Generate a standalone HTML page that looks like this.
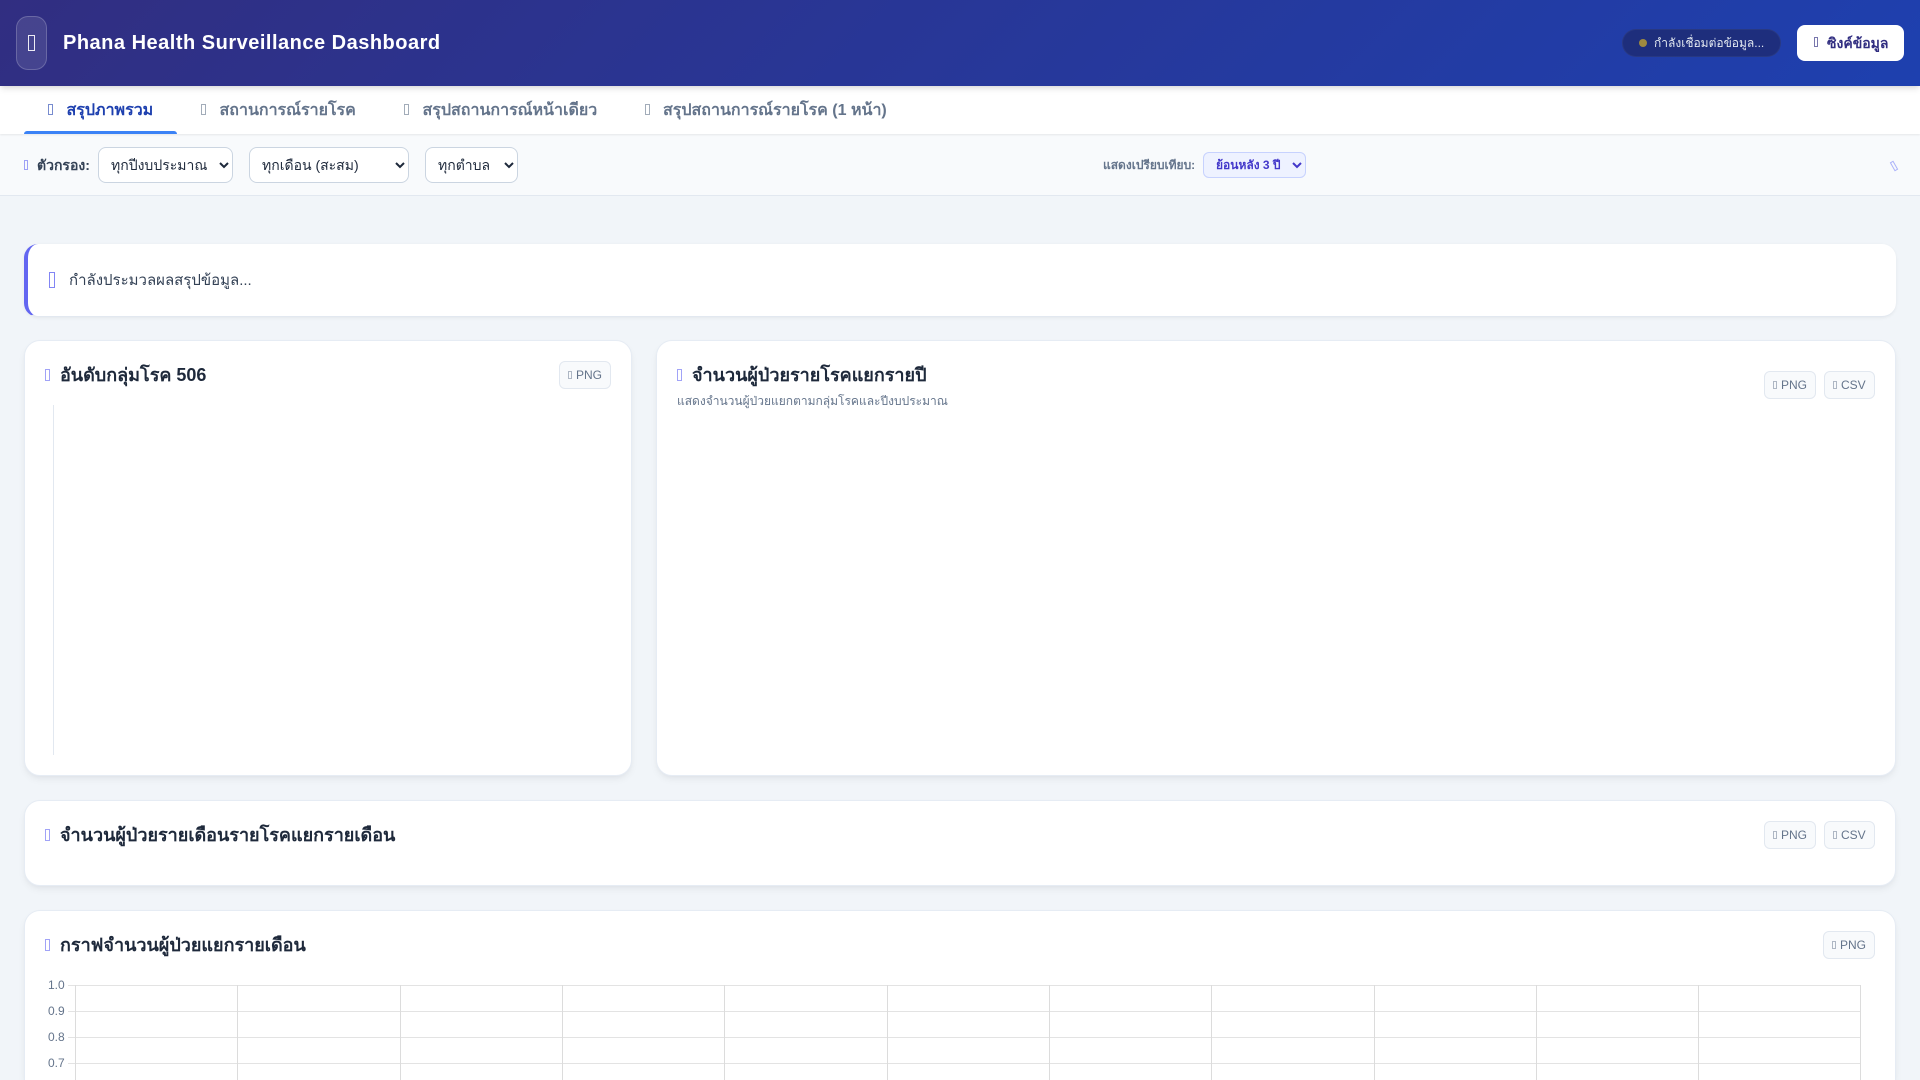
<!DOCTYPE html>
<html lang="th">
<head>
<meta charset="utf-8">
<title>Phana Health Surveillance Dashboard</title>
<style>
*{box-sizing:border-box;margin:0;padding:0}
html,body{width:1920px;height:1080px;overflow:hidden;background:#f1f5f9}
body{font-family:"Liberation Sans",sans-serif;color:#1e293b}
#page{position:relative;width:1920px;height:1080px;overflow:hidden;background:#f1f5f9}
.abs,.card,.btn,.t,.x{position:absolute}
.x{border:1px solid currentColor;z-index:6}
header{position:absolute;left:0;top:0;width:1920px;height:86px;background:linear-gradient(135deg,#312e81,#1e40af);box-shadow:0 4px 6px -1px rgba(0,0,0,.1),0 2px 4px -1px rgba(0,0,0,.06);z-index:3}
.logo{position:absolute;left:16px;top:16px;width:31px;height:54px;border-radius:12px;background:rgba(255,255,255,.1);border:1px solid rgba(255,255,255,.2)}
h1{position:absolute;left:63px;top:30px;font-size:20px;line-height:26px;font-weight:700;color:#fff;letter-spacing:.5px;white-space:nowrap}
.pill{position:absolute;left:1622px;top:29px;width:159px;height:28px;border-radius:14px;background:rgba(30,41,110,.75);border:1px solid rgba(255,255,255,.05);color:#e2e8f0;font-size:12px;line-height:26px;padding-left:31px;white-space:nowrap}
.pill b{position:absolute;left:16px;top:9px;width:8px;height:8px;border-radius:50%;background:#9f8a3f}
.sync{position:absolute;left:1797px;top:25px;width:107px;height:36px;border-radius:8px;background:#fff;color:#312e81;font-size:14px;font-weight:700;line-height:36px;white-space:nowrap}
.sync span{position:absolute;left:30px}
nav{position:absolute;left:0;top:86px;width:1920px;height:48px;background:#fff;box-shadow:0 1px 2px rgba(0,0,0,.08);z-index:2}
.tab{position:absolute;top:0;height:48px;line-height:49px;font-size:16px;font-weight:700;color:#64748b;white-space:nowrap}
.tab.on{color:#1e40af}
.under{position:absolute;left:24px;top:45px;width:153px;height:3px;background:#3b82f6;border-radius:3px 3px 0 0}
.filter{position:absolute;left:0;top:134px;width:1920px;height:62px;background:#f8fafc;border-bottom:1px solid #e2e8f0}
.lbl{position:absolute;font-size:14px;font-weight:700;color:#334155;white-space:nowrap}
select{position:absolute;top:13px;height:36px;border:1px solid #cbd5e1;border-radius:8px;background-color:#fff;font-family:inherit;font-size:14px;color:#1e293b;padding:0 8px}
.alert{position:absolute;left:24px;top:244px;width:1872px;height:73px;background:#fff;border-left:4px solid #6366f1;border-radius:14px;box-shadow:0 1px 3px rgba(0,0,0,.06);border-bottom:1px solid #e2e8f0}
.card{background:#fff;border:1px solid #e6ecf4;border-radius:16px;box-shadow:0 4px 8px -1px rgba(15,23,42,.06),0 2px 4px -1px rgba(15,23,42,.03)}
.title{position:absolute;font-size:18px;font-weight:700;line-height:24px;color:#1e293b;white-space:nowrap}
.btn{height:28px;border:1px solid #e2e8f0;border-radius:6px;background:#f8fafc;color:#64748b;font-size:12px;line-height:26px;white-space:nowrap;padding-left:16px}
.btn .x{left:8px;top:9px;width:4px;height:8px;opacity:.5}
.t{font-size:12px;color:#64748b;line-height:14px;white-space:nowrap}
.a{color:#6366f1;opacity:.6}
.g{color:#64748b;opacity:.6}
.w{color:#1e40af;opacity:.6}
svg{position:absolute;left:0;top:0}
</style>
</head>
<body>
<div id="page">
<header>
  <div class="logo"></div>
  <div class="x" style="left:28px;top:35px;width:7px;height:16px;color:#fff;opacity:.9"></div>
  <h1>Phana Health Surveillance Dashboard</h1>
  <div class="pill"><b></b>กำลังเชื่อมต่อข้อมูล...</div>
  <div class="sync"><span>ซิงค์ข้อมูล</span></div>
  <div class="x" style="left:1814px;top:37px;width:4px;height:10px;color:#312e81;opacity:.65"></div>
</header>
<nav>
  <div class="under"></div>
  <div class="x w" style="left:48px;top:18px;width:5px;height:11px"></div>
  <div class="tab on" style="left:66.5px">สรุปภาพรวม</div>
  <div class="x g" style="left:201px;top:18px;width:5px;height:11px"></div>
  <div class="tab" style="left:219.5px">สถานการณ์รายโรค</div>
  <div class="x g" style="left:404px;top:18px;width:5px;height:11px"></div>
  <div class="tab" style="left:422.5px">สรุปสถานการณ์หน้าเดียว</div>
  <div class="x g" style="left:645px;top:18px;width:5px;height:11px"></div>
  <div class="tab" style="left:663px">สรุปสถานการณ์รายโรค (1 หน้า)</div>
</nav>
<div class="filter">
  <div class="x a" style="left:24px;top:26px;width:4px;height:10px"></div>
  <div class="lbl" style="left:37px;top:23px;line-height:16px">ตัวกรอง:</div>
  <select style="left:98px;width:135px"><option>ทุกปีงบประมาณ</option></select>
  <select style="left:249px;width:160px"><option>ทุกเดือน (สะสม)</option></select>
  <select style="left:425px;width:93px"><option>ทุกตำบล</option></select>
  <div class="lbl" style="left:1103px;top:23px;line-height:16px;font-size:12px;color:#64748b">แสดงเปรียบเทียบ:</div>
  <select style="left:1203px;top:18px;width:103px;height:26px;font-size:12px;font-weight:700;color:#4338ca;background-color:#eef2ff;border-color:#c7d2fe;border-radius:6px"><option>ย้อนหลัง 3 ปี</option></select>
  <div class="x" style="left:1892px;top:27px;width:4px;height:10px;color:#818cf8;transform:rotate(-30deg);opacity:.65"></div>
</div>

<div class="alert">
  <div class="x" style="left:21px;top:28px;width:6px;height:16px;color:#6366f1;opacity:.8"></div>
  <div class="t" style="left:41px;top:27px;font-size:15px;line-height:20px;color:#334155">กำลังประมวลผลสรุปข้อมูล...</div>
</div>

<div class="card" style="left:24px;top:340px;width:608px;height:436px">
  <div class="title" style="left:35px;top:22px">อันดับกลุ่มโรค 506</div>
  <div class="btn" style="left:534px;top:20px;width:52px"><span class="x"></span>PNG</div>
  <div class="abs" style="left:28px;top:64px;width:1px;height:350px;background:#e2e8f0"></div>
</div>
<div class="x a" style="left:45px;top:369px;width:5px;height:12px"></div>

<div class="card" style="left:656px;top:340px;width:1240px;height:436px">
  <div class="title" style="left:35px;top:22px">จำนวนผู้ป่วยรายโรคแยกรายปี</div>
  <div class="t" style="left:20px;top:53px;color:#64748b">แสดงจำนวนผู้ป่วยแยกตามกลุ่มโรคและปีงบประมาณ</div>
  <div class="btn" style="left:1107px;top:30px;width:52px"><span class="x"></span>PNG</div>
  <div class="btn" style="left:1167px;top:30px;width:51px"><span class="x"></span>CSV</div>
</div>
<div class="x a" style="left:677px;top:369px;width:5px;height:12px"></div>

<div class="card" style="left:24px;top:800px;width:1872px;height:86px">
  <div class="title" style="left:35px;top:22px">จำนวนผู้ป่วยรายเดือนรายโรคแยกรายเดือน</div>
  <div class="btn" style="left:1739px;top:20px;width:52px"><span class="x"></span>PNG</div>
  <div class="btn" style="left:1799px;top:20px;width:51px"><span class="x"></span>CSV</div>
</div>
<div class="x a" style="left:45px;top:829px;width:5px;height:12px"></div>

<div class="card" style="left:24px;top:910px;width:1872px;height:170px;border-bottom:0;border-radius:16px 16px 0 0">
  <div class="title" style="left:35px;top:22px">กราฟจำนวนผู้ป่วยแยกรายเดือน</div>
  <div class="btn" style="left:1798px;top:20px;width:52px"><span class="x"></span>PNG</div>
</div>
<div class="x a" style="left:45px;top:939px;width:5px;height:12px"></div>

<svg width="1920" height="1080" style="z-index:1;pointer-events:none">
  <g stroke="#e3e3e3" stroke-width="1" shape-rendering="crispEdges">
    <line x1="68" x2="1861" y1="985.5" y2="985.5"/>
    <line x1="68" x2="1861" y1="1011.5" y2="1011.5"/>
    <line x1="68" x2="1861" y1="1037.5" y2="1037.5"/>
    <line x1="68" x2="1861" y1="1063.5" y2="1063.5"/>
  </g>
  <g stroke="#dcdcdc" stroke-width="1" shape-rendering="crispEdges">
    <line x1="75.5" x2="75.5" y1="985" y2="1080"/>
    <line x1="237.5" x2="237.5" y1="985" y2="1080"/>
    <line x1="400.5" x2="400.5" y1="985" y2="1080"/>
    <line x1="562.5" x2="562.5" y1="985" y2="1080"/>
    <line x1="724.5" x2="724.5" y1="985" y2="1080"/>
    <line x1="887.5" x2="887.5" y1="985" y2="1080"/>
    <line x1="1049.5" x2="1049.5" y1="985" y2="1080"/>
    <line x1="1211.5" x2="1211.5" y1="985" y2="1080"/>
    <line x1="1374.5" x2="1374.5" y1="985" y2="1080"/>
    <line x1="1536.5" x2="1536.5" y1="985" y2="1080"/>
    <line x1="1698.5" x2="1698.5" y1="985" y2="1080"/>
    <line x1="1860.5" x2="1860.5" y1="985" y2="1080"/>
  </g>
</svg>
<div class="t" style="left:48px;top:978px;z-index:2">1.0</div>
<div class="t" style="left:48px;top:1004px;z-index:2">0.9</div>
<div class="t" style="left:48px;top:1030px;z-index:2">0.8</div>
<div class="t" style="left:48px;top:1056px;z-index:2">0.7</div>
</div>
</body>
</html>
